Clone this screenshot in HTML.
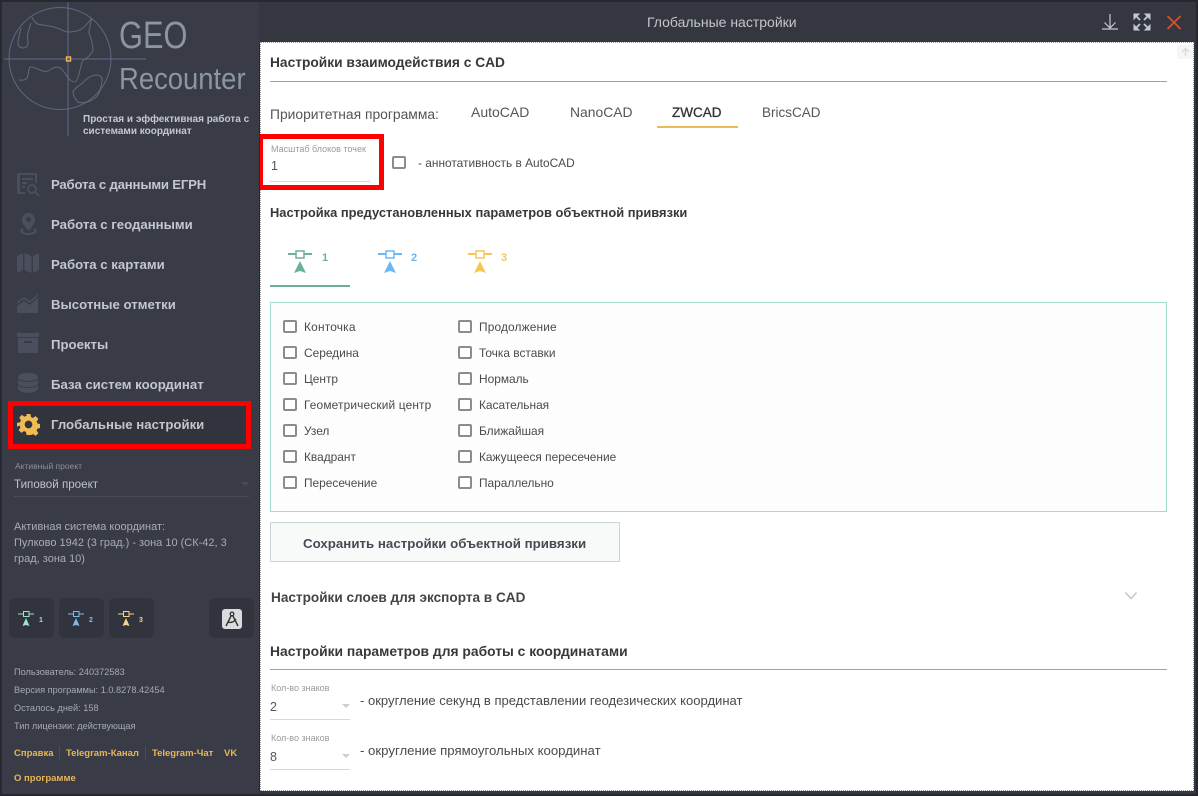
<!DOCTYPE html>
<html lang="ru">
<head>
<meta charset="utf-8">
<title>Глобальные настройки</title>
<style>
html,body{margin:0;padding:0;width:1198px;height:796px;overflow:hidden;background:#262830}
body{position:relative;font-family:"Liberation Sans","Noto Sans CJK SC",sans-serif}
.t{position:absolute;white-space:nowrap;line-height:16px}
.a{position:absolute}
.nav{left:51px;font-size:13.2px;font-weight:bold;color:#c3c6cc}
.sm{left:14px;font-size:9.2px;color:#a6a9b0}
.lk{font-size:9.5px;font-weight:bold;color:#e9b654}
.h{left:270px;font-weight:bold;color:#383838}
.p{font-size:13.5px;color:#555}
.cb{position:absolute;width:10px;height:9px;border:2px solid #8c8c8c;border-radius:2px;background:#fff}
.c{font-size:11.9px;color:#4a4a4a}
.fl{font-size:9px;color:#9a9a9a}
.side{font-size:11px;color:#a9acb3;left:14px}
.qb{position:absolute;top:598px;width:45px;height:40px;background:#31333d;border-radius:6px}
</style>
</head>
<body>
<div class="a" style="left:2px;top:2px;width:257px;height:792px;background:#393c47"></div>
<div class="a" style="left:259px;top:2px;width:937px;height:41px;background:#343640"></div>
<div class="a" style="left:259px;top:791px;width:937px;height:3px;background:#343640"></div>
<div class="a" style="left:1194px;top:43px;width:2px;height:750px;background:#343640"></div>

<svg class="a" style="left:0;top:0" width="260" height="140" viewBox="0 0 260 140" fill="none">
<circle cx="60" cy="58.500" r="51" stroke="#5d6a80" stroke-width="1"/>
<path d="M4 59H146M68 2V136" stroke="#5a6c92"/>
<path d="M32 17c1 3 3 5 3 5 2 2 5 3 8 3 5 1 9 1 14 3 4 1 7 4 11 4 5 0 9-1 12-2 5-3 9-8 12-12" stroke="#5d6a80"/>
<path d="M92 18c-1 3-2 6-2 9-1 2-1 4-1 6 1 4 3 7 3 10 1 3 1 5 1 7-1 3-3 5-5 7-2 2-5 3-6 5-1 3-1 6-2 8-1 4-3 12-5 12-3 0-5-2-7-4-3-4-5-9-8-10-4-2-7 0-10 2-3 2-6 2-10 0-4-2-7-3-10-3-2 3-1 8-3 11-2 3-5 2-8 2" stroke="#5d6a80"/>
<path d="M21 28c-1 5-3 10-3 15 0 3 2 5 5 5 3 0 5-2 5-5 0-3-1-6 0-10 1-4 2-7 3-10" stroke="#5d6a80"/>
<path d="M97 75c4 1 6 3 5 6-1 5-1 10-4 14-3 4-7 6-11 7-3 1-7 1-9 0-3-3-5-6-5-10 1-3 4-5 7-7 3-2 5-5 8-7 3-2 6-3 9-3Z" stroke="#5d6a80"/>
<rect x="66.500" y="57" width="4" height="4" stroke="#eeb84e" stroke-width="1.400"/>
</svg>
<div class="t" style="left:119px;top:12px;font-size:38px;line-height:48px;color:#8b95a3;transform:scaleX(.81);transform-origin:0 0">GEO</div>
<div class="t" style="left:118.500px;top:59px;font-size:31px;line-height:40px;color:#8b95a3;transform:scaleX(.885);transform-origin:0 0">Recounter</div>
<div class="t" style="left:83px;top:114px;font-size:10px;line-height:12px;font-weight:bold;color:#c5c8ce">Простая и эффективная работа с<br>системами координат</div>

<svg class="a" style="left:16px;top:171px" width="26" height="240" viewBox="0 0 26 240" fill="#4a4e5d">
<path fill-rule="evenodd" d="M3 2h16a2 2 0 0 1 2 2v8h-2V4H4v17h5v2H3a2 2 0 0 1-2-2V4a2 2 0 0 1 2-2Z"/>
<path d="M6 7h11v2H6zM6 11h5v2H6zM6 15h3v2H6z"/>
<circle cx="16" cy="18" r="4" fill="none" stroke="#4a4e5d" stroke-width="2"/><path d="m19 21 4 4" stroke="#4a4e5d" stroke-width="2"/>
<path fill-rule="evenodd" d="M12.500 42c-4 0-6.500 3-6.500 6.500 0 4 4 8.500 6.500 11.500 2.500-3 6.500-7.500 6.500-11.500 0-3.500-2.500-6.500-6.500-6.500Zm0 4a2.500 2.500 0 1 1 0 5 2.500 2.500 0 0 1 0-5Z"/>
<path d="M6 57c-4 3-1 7 6.500 7s10.500-4 6.500-7l-1.500 1c2 2 0 4-5 4s-7-2-5-4Z"/>
<path d="M1 85l6-3v17l-6 3ZM8.500 82l7 3v17l-7-3ZM17 85l6-3v17l-6 3Z"/>
<path d="M1 131l7-5 6 4 8-7v2l-8 7-6-4-7 5ZM1 135l7-5 6 4 8-7v15H1Z"/>
<path d="M1 162h22v4H1ZM2 167h20v15H2Zm6 3v2h8v-2Z" fill-rule="evenodd"/>
<ellipse cx="12" cy="206" rx="10" ry="4"/>
<path d="M2 208c2 4 18 4 20 0v5c-2 4-18 4-20 0ZM2 214c2 4 18 4 20 0v4c-2 5-18 5-20 0Z"/>
</svg>
<div class="t nav" style="top:177px;letter-spacing:-.2px">Работа с данными ЕГРН</div>
<div class="t nav" style="top:217px">Работа с геоданными</div>
<div class="t nav" style="top:257px">Работа с картами</div>
<div class="t nav" style="top:297px">Высотные отметки</div>
<div class="t nav" style="top:337px">Проекты</div>
<div class="t nav" style="top:377px">База систем координат</div>
<div class="a" style="left:8px;top:401px;width:243px;height:48px;box-sizing:border-box;border:5px solid #f00;background:#31333d"></div>
<svg class="a" style="left:17px;top:413px" width="23" height="23" viewBox="0 0 24 24"><path fill="#efbb55" fill-rule="evenodd" d="M10 1h4l.700 3.300 2 .800L19.500 3.300l2.800 2.800-1.800 2.800.800 2 3.300.700v4l-3.300.700-.800 2 1.800 2.800-2.800 2.800-2.800-1.800-2 .800L14 23h-4l-.700-3.300-2-.800-2.800 1.800-2.800-2.800 1.800-2.800-.800-2L0 14.300v-4l3.300-.700.800-2-1.800-2.800 2.800-2.800 2.800 1.800 2-.800ZM12 8a4 4 0 1 0 0 8 4 4 0 0 0 0-8Z"/></svg>
<div class="t nav" style="top:417px">Глобальные настройки</div>

<div class="t" style="left:15px;top:458px;font-size:8.500px;color:#8d9098">Активный проект</div>
<div class="t" style="left:14px;top:477px;font-size:11.600px;color:#bfc2c8">Типовой проект</div>
<div class="a" style="left:241px;top:482px;border:4px solid transparent;border-top:4px solid #494c58"></div>
<div class="a" style="left:14px;top:496px;width:235px;height:1px;background:#4a4d58"></div>
<div class="t side" style="top:519px">Активная система координат:</div>
<div class="t side" style="top:535px">Пулково 1942 (3 град.) - зона 10 (СК-42, 3</div>
<div class="t side" style="top:551px">град, зона 10)</div>

<div class="qb" style="left:9px"></div><div class="qb" style="left:59px"></div><div class="qb" style="left:109px"></div><div class="qb" style="left:209px"></div>
<svg class="a" style="left:0;top:598px" width="260" height="40" viewBox="0 0 260 40" fill="none" font-family="Liberation Sans" font-size="7" font-weight="bold">
<g stroke="#9fe0cf"><path d="M18 16h5m6 0h5"/><rect x="23.500" y="13.500" width="5.500" height="5"/></g><path d="M26 20l-3.500 8 3.500-1 3.500 1Z" fill="#9fe0cf"/><text x="39" y="24" fill="#9fe0cf">1</text>
<g stroke="#7bbcf0"><path d="M68 16h5m6 0h5"/><rect x="73.500" y="13.500" width="5.500" height="5"/></g><path d="M76 20l-3.500 8 3.500-1 3.500 1Z" fill="#7bbcf0"/><text x="89" y="24" fill="#7bbcf0">2</text>
<g stroke="#f6d68c"><path d="M118 16h5m6 0h5"/><rect x="123.500" y="13.500" width="5.500" height="5"/></g><path d="M126 20l-3.500 8 3.500-1 3.500 1Z" fill="#f6d68c"/><text x="139" y="24" fill="#f6d68c">3</text>
<rect x="222" y="11" width="20" height="20" rx="3" fill="#d8dcdf"/>
<circle cx="232" cy="16" r="1.800" stroke="#333" stroke-width="1.300"/><path d="M231 18l-5 10M233 18l5 10M228 24c3 1 6 0 8-3" stroke="#333" stroke-width="1.400"/>
</svg>

<div class="t sm" style="top:664px">Пользователь: 240372583</div>
<div class="t sm" style="top:682px">Версия программы: 1.0.8278.42454</div>
<div class="t sm" style="top:700px">Осталось дней: 158</div>
<div class="t sm" style="top:718px">Тип лицензии: действующая</div>
<div class="t lk" style="left:14px;top:746px">Справка</div>
<div class="a" style="left:59px;top:746px;width:1px;height:13px;background:#4a4d58"></div>
<div class="t lk" style="left:66px;top:746px">Telegram-Канал</div>
<div class="a" style="left:145px;top:746px;width:1px;height:13px;background:#4a4d58"></div>
<div class="t lk" style="left:152px;top:746px">Telegram-Чат</div>
<div class="t lk" style="left:224px;top:746px">VK</div>
<div class="t lk" style="left:14px;top:771px">О программе</div>

<div class="t" style="left:647px;top:14px;font-size:14px;color:#c3c6cc">Глобальные настройки</div>
<svg class="a" style="left:1098px;top:10px" width="90" height="24" viewBox="0 0 90 24" fill="none">
<path d="M4 19h16M12 4v14M6.500 12.500l5.500 5.500 5.500-5.500" stroke="#c5c9cf" stroke-width="1.200"/>
<path d="M36 9V4h5ZM52 9V4h-5ZM36 15v5h5ZM52 15v5h-5Z" fill="#c5c9cf" stroke="#c5c9cf" stroke-width="1"/>
<path d="M37 5l5 5M51 5l-5 5M37 19l5-5M51 19l-5-5" stroke="#c5c9cf" stroke-width="1.800"/>
<path d="M69.500 6l13 13M82.500 6l-13 13" stroke="#dc5124" stroke-width="1.800"/>
</svg>

<div class="a" style="left:260px;top:42px;width:934px;height:749px;background:#fff;box-sizing:border-box;border:1px dotted #999"></div>
<div class="a" style="left:1177px;top:45px;width:16px;height:14px;background:#f6f6f6"></div>
<svg class="a" style="left:1180px;top:47px" width="11" height="10" viewBox="0 0 11 10" fill="none"><path d="M5.500 9V2M2 5l3.500-3.500L9 5" stroke="#dcdcdc" stroke-width="1.500"/></svg>

<div class="t h" style="top:55px;font-size:13.750px">Настройки взаимодействия с CAD</div>
<div class="a" style="left:270px;top:81px;width:897px;height:1px;background:#e8962c"></div>
<div class="t p" style="left:270px;top:106px;font-size:13.850px">Приоритетная программа:</div>
<div class="t p" style="left:471px;top:104px;font-size:14px">AutoCAD</div>
<div class="t p" style="left:570px;top:104px;font-size:13.900px">NanoCAD</div>
<div class="t p" style="left:672px;top:105px;color:#333;-webkit-text-stroke:.3px #333">ZWCAD</div>
<div class="t p" style="left:762px;top:105px">BricsCAD</div>
<div class="a" style="left:657px;top:126px;width:81px;height:2px;background:#eeb957"></div>

<div class="a" style="left:260px;top:134px;width:124px;height:56px;box-sizing:border-box;border:5px solid #f00;border-left-width:3px"></div>
<div class="t fl" style="left:271px;top:141px">Масштаб блоков точек</div>
<div class="t" style="left:271px;top:158px;font-size:12.500px;color:#555">1</div>
<div class="a" style="left:270px;top:181px;width:100px;height:1px;background:#d5d8d8"></div>
<div class="cb" style="left:392px;top:156px"></div>
<div class="t c" style="left:418px;top:155px">- аннотативность в AutoCAD</div>

<div class="t h" style="top:205px;font-size:12.900px">Настройка предустановленных параметров объектной привязки</div>

<svg class="a" style="left:270px;top:245px" width="250" height="44" viewBox="0 0 250 44" fill="none" font-family="Liberation Sans" font-size="11" font-weight="bold">
<g stroke="#6cb09a" stroke-width="2"><path d="M18 9h8m8 0h8"/><rect x="26" y="6" width="8" height="7" stroke-width="1.500"/></g><path d="M30 16l-6 12 6-2 6 2Z" fill="#6cb09a"/><text x="52" y="16" fill="#6cb09a">1</text>
<g stroke="#6db8f2" stroke-width="2"><path d="M108 9h8m8 0h8"/><rect x="116" y="6" width="8" height="7" stroke-width="1.500"/></g><path d="M120 16l-6 12 6-2 6 2Z" fill="#6db8f2"/><text x="141" y="16" fill="#6db8f2">2</text>
<g stroke="#f5c558" stroke-width="2"><path d="M198 9h8m8 0h8"/><rect x="206" y="6" width="8" height="7" stroke-width="1.500"/></g><path d="M210 16l-6 12 6-2 6 2Z" fill="#f5c558"/><text x="231" y="16" fill="#f5c558">3</text>
<rect x="0" y="40" width="80" height="2" fill="#6cb09a"/>
</svg>

<div class="a" style="left:270px;top:302px;width:897px;height:210px;box-sizing:border-box;border:1px solid #a0dfcb;background:#fdfdfd"></div>
<div class="cb" style="left:283px;top:320px"></div><div class="t c" style="left:304px;top:319px;letter-spacing:.2px">Конточка</div>
<div class="cb" style="left:283px;top:346px"></div><div class="t c" style="left:304px;top:345px">Середина</div>
<div class="cb" style="left:283px;top:372px"></div><div class="t c" style="left:304px;top:371px">Центр</div>
<div class="cb" style="left:283px;top:398px"></div><div class="t c" style="left:304px;top:397px;letter-spacing:.15px">Геометрический центр</div>
<div class="cb" style="left:283px;top:424px"></div><div class="t c" style="left:304px;top:423px">Узел</div>
<div class="cb" style="left:283px;top:450px"></div><div class="t c" style="left:304px;top:449px">Квадрант</div>
<div class="cb" style="left:283px;top:476px"></div><div class="t c" style="left:304px;top:475px">Пересечение</div>
<div class="cb" style="left:458px;top:320px"></div><div class="t c" style="left:479px;top:319px;letter-spacing:.15px">Продолжение</div>
<div class="cb" style="left:458px;top:346px"></div><div class="t c" style="left:479px;top:345px">Точка вставки</div>
<div class="cb" style="left:458px;top:372px"></div><div class="t c" style="left:479px;top:371px">Нормаль</div>
<div class="cb" style="left:458px;top:398px"></div><div class="t c" style="left:479px;top:397px">Касательная</div>
<div class="cb" style="left:458px;top:424px"></div><div class="t c" style="left:479px;top:423px">Ближайшая</div>
<div class="cb" style="left:458px;top:450px"></div><div class="t c" style="left:479px;top:449px">Кажущееся пересечение</div>
<div class="cb" style="left:458px;top:476px"></div><div class="t c" style="left:479px;top:475px">Параллельно</div>

<div class="a" style="left:270px;top:522px;width:350px;height:40px;box-sizing:border-box;border:1px solid #c9d6d4;background:#f8fafa"></div>
<div class="t" style="left:303px;top:536px;font-size:13.300px;font-weight:bold;color:#444b55">Сохранить настройки объектной привязки</div>

<div class="t h" style="left:271px;top:590px;font-size:13.600px;color:#444">Настройки слоев для экспорта в CAD</div>
<svg class="a" style="left:1124px;top:591px" width="14" height="10" viewBox="0 0 14 10" fill="none"><path d="M1.500 1.500 7 7.500l5.500-6" stroke="#c4c4c4" stroke-width="1.500"/></svg>
<div class="t h" style="top:643px;font-size:13.850px">Настройки параметров для работы с координатами</div>
<div class="a" style="left:270px;top:669px;width:897px;height:1px;background:#e8962c"></div>

<div class="t fl" style="left:271px;top:680px">Кол-во знаков</div>
<div class="t" style="left:270px;top:699px;font-size:12.500px;color:#555">2</div>
<div class="a" style="left:342px;top:704px;border:4px solid transparent;border-top:4px solid #c8d0d0"></div>
<div class="a" style="left:270px;top:719px;width:80px;height:1px;background:#d5d8d8"></div>
<div class="t" style="left:360px;top:693px;font-size:13.050px;color:#4a4a4a">- округление секунд в представлении геодезических координат</div>

<div class="t fl" style="left:271px;top:730px">Кол-во знаков</div>
<div class="t" style="left:270px;top:749px;font-size:12.500px;color:#555">8</div>
<div class="a" style="left:342px;top:754px;border:4px solid transparent;border-top:4px solid #c8d0d0"></div>
<div class="a" style="left:270px;top:769px;width:80px;height:1px;background:#d5d8d8"></div>
<div class="t" style="left:360px;top:743px;font-size:13.200px;color:#4a4a4a">- округление прямоугольных координат</div>
</body>
</html>
